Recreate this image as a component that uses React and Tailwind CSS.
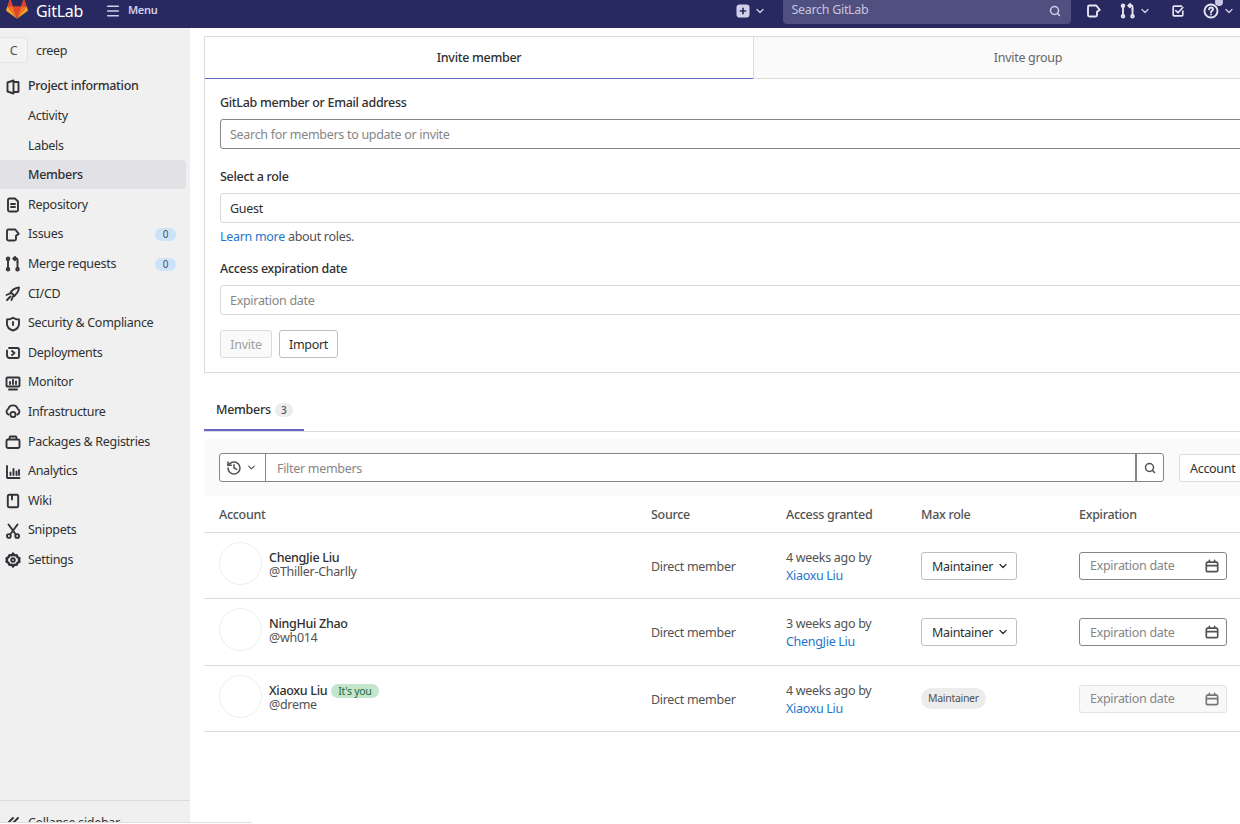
import { ChevronDown, History, Menu, Search } from 'lucide-react';

function Icon({ children, className = 'text-[#333238]', size = 'h-4 w-4' }) {
  return (
    <svg viewBox="0 0 16 16" strokeLinecap="round" strokeLinejoin="round" className={`${size} shrink-0 fill-none stroke-current stroke-[1.9] ${className}`}>
      {children}
    </svg>
  );
}

const icons = {
  project: <path d="M2.500 3.500 8.500 1.500v13l-6-2zM8.500 3h4.500a.5.5 0 0 1 .5.5v9a.5.5 0 0 1-.5.5H8.500" />,
  repo: <path d="M3 3a1.500 1.500 0 0 1 1.500-1.500H10L13 4.500V13a1.500 1.500 0 0 1-1.500 1.500h-7A1.500 1.500 0 0 1 3 13zM6 7h4M6 10h4" />,
  issues: <path d="M2 4a1.500 1.500 0 0 1 1.500-1.500h6.800l3.400 4.400-2.700 1.800V12a1.500 1.500 0 0 1-1.500 1.500h-6A1.500 1.500 0 0 1 2 12z" />,
  merge: (
    <>
      <path d="M3 4.500v7M12.500 6v5.500M11.500 2.500H8.500M10 1 8.200 2.600 10 4.200" />
      <path d="M11.500 2.500c.7.2 1 .8 1 1.500v2" />
      <circle cx="3" cy="2.800" r="1.300" />
      <circle cx="3" cy="13.200" r="1.300" />
      <circle cx="12.500" cy="13.200" r="1.300" />
    </>
  ),
  rocket: <path d="M1.500 9 5 7.500c1.500-3 4.500-5.500 9-6-.5 4.500-3 7.500-6 9L6.500 14M5.500 10.500 2 14M6 6.500l3.500 3.500" />,
  shield: <path d="M8 1.800c1.800 1.200 3.800 1.700 6 1.700v4.500c0 3.200-2.500 5.400-6 6.500-3.500-1.100-6-3.300-6-6.500V3.500c2.200 0 4.200-.5 6-1.700zM8 6v3" />,
  deploy: <path d="M4 3h8.500A1.500 1.500 0 0 1 14 4.500v7a1.500 1.500 0 0 1-1.500 1.500H5M2 5.500v5A2.500 2.500 0 0 0 4.500 13M7 6l2.500 2L7 10" />,
  monitor: <path d="M2.500 2.500h11a1 1 0 0 1 1 1v7a1 1 0 0 1-1 1h-11a1 1 0 0 1-1-1v-7a1 1 0 0 1 1-1zM4 14.500h8M5 9V7M8 9V5M11 9V6.500" />,
  infra: (
    <>
      <path d="M3.500 10.500A3 3 0 0 1 3.200 5 5 5 0 0 1 12.800 5a3 3 0 0 1-.3 5.500" />
      <circle cx="8" cy="10.500" r="2.600" />
    </>
  ),
  packages: <path d="M3 5.500h10a1.500 1.500 0 0 1 1.500 1.500v5.500A1.500 1.500 0 0 1 13 14H3a1.500 1.500 0 0 1-1.500-1.500V7A1.500 1.500 0 0 1 3 5.500zM4 5.500 5 2.500h6l1 3" />,
  analytics: <path d="M2 2v11.500a.5.5 0 0 0 .5.5H14.500M5.500 11V8.500M8.500 11V5M11.500 11V7.500M14 11V6" />,
  wiki: <path d="M4 1.800h8a1.200 1.200 0 0 1 1.200 1.200v10a1.200 1.200 0 0 1-1.200 1.200H4A1.200 1.200 0 0 1 2.800 13V3A1.200 1.200 0 0 1 4 1.800zM7 2v4.500" />,
  snippets: (
    <>
      <path d="M3.500 1.500 10.500 11M12.500 1.500 5.500 11" />
      <circle cx="3.800" cy="13" r="1.900" />
      <circle cx="12.200" cy="13" r="1.900" />
    </>
  ),
  settings: (
    <>
      <path d="M8 1.500l1.300 1.900 2.300-.3.900 2.100 2 1.100-.6 1.700.6 1.700-2 1.100-.9 2.100-2.300-.3L8 14.500l-1.300-1.900-2.300.3-.9-2.100-2-1.100.6-1.700-.6-1.700 2-1.100.9-2.100 2.300.3z" className="stroke-[2.400]" />
      <circle cx="8" cy="8" r="1.800" />
    </>
  ),
  plus: (
    <>
      <rect x="1.500" y="1.500" width="13" height="13" rx="2.500" className="fill-current" />
      <path d="M8 5v6M5 8h6" className="stroke-[#292961]" />
    </>
  ),
  todo: <path d="M12 2.500H3.500a1 1 0 0 0-1 1v9a1 1 0 0 0 1 1h9a1 1 0 0 0 1-1V8M5.500 7.500 8 10l5.500-6" />,
  help: (
    <>
      <circle cx="8" cy="8" r="6.500" />
      <path d="M6 6.300C6.200 5 7 4.500 8 4.500c1.200 0 2 .7 2 1.700 0 1.500-2 1.500-2 3M8 11.500v.1" />
    </>
  ),
  calendar: <path d="M3 3.500h10A1.500 1.500 0 0 1 14.500 5v8a1.500 1.500 0 0 1-1.500 1.500H3A1.500 1.500 0 0 1 1.500 13V5A1.500 1.500 0 0 1 3 3.500zM1.500 7.500h13M5 1.500v2M11 1.500v2" />,
  collapse: <path d="M8 3 2 9M13 3 5 11" />,
};

const nav = [
  { icon: 'project', label: 'Project information', strong: true },
  { label: 'Activity' },
  { label: 'Labels' },
  { label: 'Members', active: true },
  { icon: 'repo', label: 'Repository' },
  { icon: 'issues', label: 'Issues', count: 0 },
  { icon: 'merge', label: 'Merge requests', count: 0 },
  { icon: 'rocket', label: 'CI/CD' },
  { icon: 'shield', label: 'Security & Compliance' },
  { icon: 'deploy', label: 'Deployments' },
  { icon: 'monitor', label: 'Monitor' },
  { icon: 'infra', label: 'Infrastructure' },
  { icon: 'packages', label: 'Packages & Registries' },
  { icon: 'analytics', label: 'Analytics' },
  { icon: 'wiki', label: 'Wiki' },
  { icon: 'snippets', label: 'Snippets' },
  { icon: 'settings', label: 'Settings' },
];

const members = [
  { name: 'ChengJie Liu', handle: '@Thiller-Charlly', when: '4 weeks ago by', by: 'Xiaoxu Liu', h: 'h-[66px]' },
  { name: 'NingHui Zhao', handle: '@wh014', when: '3 weeks ago by', by: 'ChengJie Liu', h: 'h-[67px]' },
  { name: 'Xiaoxu Liu', handle: '@dreme', when: '4 weeks ago by', by: 'Xiaoxu Liu', h: 'h-[66px]', you: true },
];

function Logo() {
  return (
    <svg viewBox="0 0 36 34" className="-mt-[3px] ml-[6px] h-[22px] w-[22px]">
      <path fill="#e24329" d="M18 33 24.600 12.700H11.400z" />
      <path fill="#fc6d26" d="M18 33 11.400 12.700H2.200zM18 33l6.600-20.300h9.200z" />
      <path fill="#fca326" d="M2.200 12.700.2 18.900a1.400 1.400 0 0 0 .5 1.500L18 33zM33.800 12.700l2 6.200a1.400 1.400 0 0 1-.5 1.500L18 33z" />
      <path fill="#e24329" d="M2.200 12.700h9.200L7.400.5a.7.7 0 0 0-1.300 0zM33.800 12.700h-9.200l4-12.200a.7.7 0 0 1 1.300 0z" />
    </svg>
  );
}

function Header() {
  return (
    <header className="flex h-7 shrink-0 items-center bg-[#292961] pb-[7px] text-[#d1d0e9]">
      <Logo />
      <span className="ml-[8px] text-[16px] text-white">GitLab</span>
      <Menu size={16} strokeWidth={2.2} className="ml-[22px]" />
      <span className="ml-[7px] text-[11px] font-semibold">Menu</span>
      <div className="ml-[579px] flex items-center">
        <Icon size="h-[14px] w-[14px]" className="text-[#d1d0e9]">{icons.plus}</Icon>
        <ChevronDown size={12} strokeWidth={2.5} className="ml-[4px]" />
      </div>
      <div className="ml-[17px] flex h-[24px] w-[288px] items-center justify-between self-start rounded-b-[4px] bg-[#4f4f80] pb-[3px] pl-[8px] pr-[10px]">
        <span className="text-[12.500px] text-[#c5c4dd]">Search GitLab</span>
        <Search size={12} strokeWidth={3} />
      </div>
      <div className="ml-[15px] flex items-center">
        <Icon className="text-[#e6e5f2]">{icons.issues}</Icon>
        <div className="ml-[18px]"><Icon className="text-[#e6e5f2]">{icons.merge}</Icon></div>
        <ChevronDown size={12} strokeWidth={2.5} className="ml-[3px]" />
        <div className="ml-[20px]"><Icon size="h-[14px] w-[14px]" className="text-[#e6e5f2]">{icons.todo}</Icon></div>
        <div className="relative ml-[18px]">
          <Icon className="text-[#e6e5f2]">{icons.help}</Icon>
          <span className="absolute -top-[5px] right-[-4px] h-2 w-2 rounded-full bg-[#c9c8e8]" />
        </div>
        <ChevronDown size={12} strokeWidth={2.5} className="ml-[4px]" />
      </div>
    </header>
  );
}

function Sidebar() {
  return (
    <aside className="relative flex w-[190px] shrink-0 flex-col bg-[#f0f0f0] text-[12.500px] text-[#303030]">
      <div className="mt-[9px] flex h-[26px] items-center">
        <div className="flex h-[26px] w-[28px] items-center justify-center rounded-r-[4px] border border-l-0 border-[#e3e3e3] bg-[#f3f3f3] pt-[2px] text-[#525252]">C</div>
        <span className="ml-[8px] pt-[3px]">creep</span>
      </div>
      <ul className="mt-[8px]">
        {nav.map((item) => (
          <li
            key={item.label}
            className={`flex h-[29.600px] items-center pl-[5px] pr-[14px] pt-[2px] ${item.active ? 'mr-[4px] rounded-r-[4px] bg-[#e1e1e6] font-medium' : ''}`}
          >
            <span className="flex w-[23px] shrink-0">{item.icon && <Icon>{icons[item.icon]}</Icon>}</span>
            <span className={item.strong ? 'font-medium' : ''}>{item.label}</span>
            {item.count !== undefined && (
              <span className="ml-auto flex h-[13px] w-[21px] items-center justify-center rounded-full bg-[#cbe2f9] text-[10px] text-[#525252]">{item.count}</span>
            )}
          </li>
        ))}
      </ul>
      <div className="mt-auto flex h-[24px] items-start overflow-hidden border-t border-[#dcdcdc] pl-[5px] pt-[14px] leading-[16px]">
        <span className="flex w-[23px] shrink-0"><Icon>{icons.collapse}</Icon></span>
        <span>Collapse sidebar</span>
      </div>
      {/* strip left over at the window's bottom edge */}
      <div className="absolute bottom-0 left-0 h-[2px] w-[252px] rounded-tr-[4px] border-t border-[#dddddd] bg-white" />
    </aside>
  );
}

function Field({ label, placeholder, strong, value, className = '' }) {
  return (
    <div className={className}>
      <label className="block pt-[1px] text-[12.500px] font-medium leading-[16px] text-[#303030]">{label}</label>
      <div className={`mt-[8px] flex h-[30px] items-center rounded-[3px] border bg-white px-[9px] pt-[2px] text-[12.500px] ${strong ? 'border-[#868686]' : 'border-[#dbdbdb]'} ${value ? 'text-[#303030]' : 'text-[#868686]'}`}>
        {value || placeholder}
      </div>
    </div>
  );
}

function InvitePanel() {
  return (
    <section className="mt-[8px] h-[337px] border border-r-0 border-[#dbdbdb] text-[12.500px]">
      <div className="grid h-[41px] grid-cols-[548px_1fr] text-center leading-[41px]">
        <div className="border-b border-[#6666c4] font-medium text-[#303030]">Invite member</div>
        <div className="border-b border-l border-[#dbdbdb] bg-[#fafafa] text-[#666666]">Invite group</div>
      </div>
      <div className="px-[15px] pt-[16px]">
        <Field label="GitLab member or Email address" placeholder="Search for members to update or invite" strong />
        <Field className="mt-[19px]" label="Select a role" value="Guest" />
        <p className="mt-[5px] leading-[17px] text-[#525252]"><span className="text-[#1f75cb]">Learn more</span> about roles.</p>
        <Field className="mt-[15px]" label="Access expiration date" placeholder="Expiration date" />
        <div className="mt-[15px] flex gap-[7px]">
          <button className="h-[28px] w-[52px] rounded-[3px] border border-[#dbdbdb] bg-[#fafafa] pt-[2px] text-[#a0a0a0]">Invite</button>
          <button className="h-[28px] w-[59px] rounded-[3px] border border-[#bfbfbf] bg-white pt-[2px] text-[#303030]">Import</button>
        </div>
      </div>
    </section>
  );
}

function FilterBar() {
  return (
    <div className="mt-[7px] flex h-[57px] items-center bg-[#fafafa] pl-[15px] text-[12.500px]">
      <div className="flex h-[29px] w-[945px] rounded-[3px] border border-[#868686] bg-white">
        <div className="flex w-[46px] shrink-0 items-center justify-center gap-[4px] border-r border-[#868686] pr-[2px] text-[#525252]">
          <History size={16} strokeWidth={2.3} />
          <ChevronDown size={11} strokeWidth={2.5} />
        </div>
        <div className="flex flex-1 items-center pl-[11px] pt-[3px] text-[#868686]">Filter members</div>
        <div className="flex w-[28px] shrink-0 items-center justify-center border-l-2 border-[#868686] text-[#525252]">
          <Search size={12} strokeWidth={3} />
        </div>
      </div>
      <div className="ml-[15px] flex h-[28px] w-[120px] items-center rounded-[3px] border border-[#dbdbdb] bg-white pl-[10px] pt-[3px] text-[#303030]">Account</div>
    </div>
  );
}

function ExpirationInput({ disabled }) {
  return (
    <div className={`flex h-[28px] w-[148px] items-center justify-between rounded-[3px] border pl-[10px] pr-[7px] ${disabled ? 'border-[#e3e3e3] bg-[#f8f8f8]' : 'border-[#868686] bg-white'}`}>
      <span className="pt-[2px] text-[#868686]">Expiration date</span>
      <Icon size="h-[14px] w-[14px]" className={disabled ? 'text-[#767676]' : 'text-[#525252]'}>{icons.calendar}</Icon>
    </div>
  );
}

function MembersTable() {
  const cols = 'grid grid-cols-[432px_135px_135px_158px_1fr] items-center pl-[15px]';
  return (
    <div className="text-[12.500px]">
      <div className={`${cols} h-[37px] border-b border-[#dbdbdb] pt-[2px] font-medium text-[#525252]`}>
        <span>Account</span>
        <span>Source</span>
        <span>Access granted</span>
        <span>Max role</span>
        <span>Expiration</span>
      </div>
      {members.map((m) => (
        <div key={m.name} className={`${cols} ${m.h} border-b border-[#dbdbdb] text-[#525252]`}>
          <div className="flex items-center self-start pt-[9px]">
            <div className="h-[43px] w-[43px] rounded-full border border-[#ededed] bg-white" />
            <div className="ml-[7px] pt-[2px] leading-[14px]">
              <div className="flex items-center gap-[4px]">
                <span className="font-medium text-[#303030]">{m.name}</span>
                {m.you && <span className="flex h-[14px] items-center rounded-full bg-[#c3e6cd] px-[7px] text-[10.500px] text-[#24663b]">It's you</span>}
              </div>
              <div>{m.handle}</div>
            </div>
          </div>
          <span className="pt-[3px]">Direct member</span>
          <div className="pt-[2px] leading-[18px]">
            <div>{m.when}</div>
            <div className="text-[#1f75cb]">{m.by}</div>
          </div>
          <div>
            {m.you ? (
              <span className="inline-flex h-[21px] items-center rounded-full bg-[#ececec] px-[7px] pt-[1px] text-[10.500px] text-[#525252]">Maintainer</span>
            ) : (
              <div className="flex h-[28px] w-[96px] items-center justify-between rounded-[3px] border border-[#bfbfbf] bg-white pl-[10px] pr-[7px] text-[#303030]">
                <span className="pt-[3px]">Maintainer</span>
                <ChevronDown size={12} strokeWidth={2.5} />
              </div>
            )}
          </div>
          <ExpirationInput disabled={m.you} />
        </div>
      ))}
    </div>
  );
}

export default function App() {
  return (
    <div className="flex h-[824px] w-[1240px] flex-col overflow-hidden bg-white font-['Noto_Sans',sans-serif] tracking-[-0.3px]">
      <Header />
      <div className="flex min-h-0 flex-1">
        <Sidebar />
        <main className="min-w-0 flex-1 overflow-hidden">
          <div className="ml-[14px] w-[1098px]">
            <InvitePanel />
            <div className="mt-[15px] flex h-[44px] border-b border-[#dbdbdb]">
              <div className="flex h-[43px] w-[100px] items-center border-b-2 border-[#6666c4] pl-[12px] pt-[3px] text-[12.500px] font-medium text-[#303030]">
                Members
                <span className="ml-[4px] flex h-[14px] w-[18px] items-center justify-center rounded-full bg-[#ececef] text-[10px] text-[#525252]">3</span>
              </div>
            </div>
            <FilterBar />
            <MembersTable />
          </div>
        </main>
      </div>
    </div>
  );
}
